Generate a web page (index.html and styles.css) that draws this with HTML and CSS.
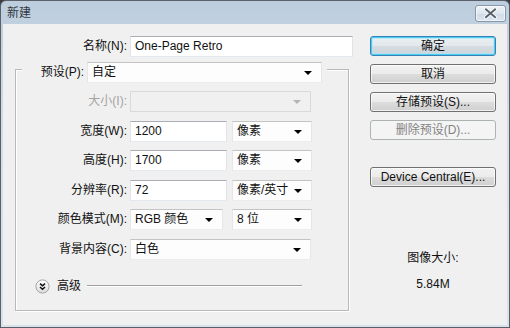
FILE: index.html
```html
<!DOCTYPE html>
<html lang="zh-CN">
<head>
<meta charset="utf-8">
<title>新建</title>
<link rel="stylesheet" href="styles.css">
</head>
<body>
<div class="window">
  <div class="titlebar">
    <span class="title">新建</span>
    <div class="close">
      <svg width="31" height="17" viewBox="0 0 31 17">
        <path d="M10.5 4 L20.5 12.5 M20.5 4 L10.5 12.5" stroke="#f4f7fa" stroke-width="4.4" stroke-linecap="round" fill="none"/>
        <path d="M10.5 4 L20.5 12.5 M20.5 4 L10.5 12.5" stroke="#5a6068" stroke-width="2" stroke-linecap="round" fill="none"/>
      </svg>
    </div>
  </div>
  <div class="body">
    <div class="main">
      <div class="name-row">
        <span class="lbl name-lbl">名称(N):</span>
        <div class="input name-input">One-Page Retro</div>
      </div>
      <div class="group">
        <div class="legend">
          <span class="lbl">预设(P):</span>
          <div class="select preset">自定<span class="arrow"></span></div>
        </div>
        <div class="rows">
          <div class="frow">
            <span class="lbl glbl disabled">大小(I):</span>
            <div class="select disabled-field w181"><span class="arrow grey"></span></div>
          </div>
          <div class="frow">
            <span class="lbl glbl">宽度(W):</span>
            <div class="input w97">1200</div>
            <div class="select w80 unit">像素<span class="arrow"></span></div>
          </div>
          <div class="frow">
            <span class="lbl glbl">高度(H):</span>
            <div class="input w97">1700</div>
            <div class="select w80 unit">像素<span class="arrow"></span></div>
          </div>
          <div class="frow">
            <span class="lbl glbl">分辨率(R):</span>
            <div class="input w97">72</div>
            <div class="select w80 unit">像素/英寸<span class="arrow"></span></div>
          </div>
          <div class="frow">
            <span class="lbl glbl">颜色模式(M):</span>
            <div class="select w93">RGB 颜色<span class="arrow"></span></div>
            <div class="select w80 bits">8 位<span class="arrow"></span></div>
          </div>
          <div class="frow">
            <span class="lbl glbl">背景内容(C):</span>
            <div class="select w181">白色<span class="arrow"></span></div>
          </div>
        </div>
        <div class="advanced">
          <svg class="adv-icon" width="15" height="15" viewBox="0 0 15 15">
            <defs>
              <linearGradient id="g" x1="0" y1="0" x2="0" y2="1">
                <stop offset="0" stop-color="#ffffff"/>
                <stop offset="1" stop-color="#dcdcdc"/>
              </linearGradient>
            </defs>
            <circle cx="7.5" cy="7.5" r="6.6" fill="url(#g)" stroke="#a3a3a3" stroke-width="1"/>
            <path d="M5 4.6 L7.5 6.8 L10 4.6 M5 8 L7.5 10.2 L10 8" stroke="#111" stroke-width="1.5" fill="none"/>
          </svg>
          <span class="adv-text">高级</span>
          <span class="adv-line"></span>
        </div>
      </div>
    </div>
    <div class="side">
      <div class="btn primary">确定</div>
      <div class="btn">取消</div>
      <div class="btn">存储预设(S)...</div>
      <div class="btn disabled-btn">删除预设(D)...</div>
      <div class="btn device">Device Central(E)...</div>
      <div class="size-label">图像大小:</div>
      <div class="size-value">5.84M</div>
    </div>
  </div>
</div>
</body>
</html>
```

FILE: styles.css
```css
* { box-sizing: border-box; }

html, body {
  margin: 0;
  padding: 0;
  background: #3a3d42;
}

body {
  font-family: "Liberation Sans", "Noto Sans CJK SC", sans-serif;
  font-size: 12px;
  color: #111;
}

.window {
  width: 510px;
  height: 328px;
  border: 1px solid #5b6068;
  border-radius: 6px 6px 0 0;
  background: linear-gradient(#bccddd, #d2dde8 40%, #d8e2ec);
  display: flex;
  flex-direction: column;
  overflow: hidden;
}

.titlebar {
  height: 23px;
  display: flex;
  align-items: flex-start;
  justify-content: space-between;
  padding: 0 3px 0 6px;
  flex: none;
}

.title {
  margin-top: 4px;
  line-height: 16px;
  color: #33373c;
  font-size: 12px;
}

.close {
  margin-top: 4px;
  width: 31px;
  height: 17px;
  border: 1px solid #8796a8;
  border-radius: 3px;
  background: linear-gradient(#eef3f8, #dde6ef 50%, #d0dce8 51%, #dbe5ef);
  box-shadow: inset 0 0 0 1px rgba(255,255,255,0.6);
  display: flex;
  align-items: center;
  justify-content: center;
}
.close svg { display: block; margin-top: -1px; }

.body {
  flex: 1;
  margin: 0 2px 2px 2px;
  background: #f0f0f0;
  display: flex;
  align-items: flex-start;
}

.main {
  width: 350px;
  padding-top: 12px;
  flex: none;
}

.lbl {
  line-height: 21px;
  white-space: nowrap;
}

.name-row {
  display: flex;
  height: 21px;
}
.name-lbl {
  width: 124px;
  text-align: right;
  margin-right: 3px;
}

.input, .select {
  height: 21px;
  background: #fff;
  border: 1px solid;
  border-color: #abadb3 #e2e3ea #e3e9ef #e2e3ea;
  padding-left: 4px;
  line-height: 19px;
  white-space: nowrap;
}

.name-input { width: 223px; }

.select {
  display: flex;
  align-items: center;
  padding-right: 9px;
  background: #fdfdfd;
  border-color: #c3c3c3 #e6e6e6 #ececec #e6e6e6;
}

.arrow {
  margin-left: auto;
  width: 0;
  height: 0;
  border-left: 4px solid transparent;
  border-right: 4px solid transparent;
  border-top: 4px solid #000;
  margin-top: 1px;
}
.arrow.grey { border-top-color: #b5b5b5; }

.group {
  margin-top: 12px;
  margin-left: 12px;
  width: 334px;
  border: 1px solid #b9b9b9;
  box-shadow: inset 1px 1px 0 #ffffff, 1px 1px 0 #ffffff;
  padding-bottom: 16px;
}

.legend {
  margin-top: -8px;
  margin-left: 6px;
  width: 305px;
  padding-right: 5px;
  background: #f0f0f0;
  display: flex;
  justify-content: flex-end;
  gap: 3px;
}

.preset { width: 235px; }

.rows {
  margin-top: 8px;
  display: flex;
  flex-direction: column;
  row-gap: 8.6px;
}

.frow {
  display: flex;
  height: 21px;
}

.glbl {
  width: 111px;
  text-align: right;
  margin-right: 3px;
}

.disabled { color: #a3a3a3; }

.disabled-field {
  background: #f0f0f0;
  border-color: #d9d9d9;
}

.w97 { width: 97px; }
.w80 { width: 80px; }
.w93 { width: 93px; }
.w181 { width: 181px; }
.unit { margin-left: 5px; }
.bits { margin-left: 9px; }

.advanced {
  margin-top: 19px;
  margin-left: 19px;
  height: 15px;
  display: flex;
  align-items: center;
}
.adv-icon { display: block; flex: none; }
.adv-text {
  margin-left: 7px;
  line-height: 15px;
}
.adv-line {
  margin-left: 6px;
  width: 215px;
  height: 2px;
  border-top: 1px solid #a0a0a0;
  border-bottom: 1px solid #ffffff;
}

.side {
  margin-left: 17px;
  width: 126px;
  padding-top: 12px;
  display: flex;
  flex-direction: column;
  gap: 8px;
  flex: none;
}

.btn {
  height: 20px;
  border: 1px solid #707070;
  border-radius: 3px;
  background: linear-gradient(#f2f2f2, #ebebeb 50%, #dddddd 51%, #cfcfcf);
  box-shadow: inset 0 0 0 1px rgba(255,255,255,0.7);
  text-align: center;
  line-height: 18px;
  color: #111;
  white-space: nowrap;
}

.primary {
  border-color: #3c7fb1;
  box-shadow: inset 0 0 0 1px #48cff5, inset 0 0 0 2px rgba(160,228,250,0.6);
  background: linear-gradient(#eaeff2, #e3e8ec 50%, #d6dde2 51%, #cdd4d9);
}

.disabled-btn {
  border-color: #adb2b5;
  background: #f4f4f4;
  box-shadow: none;
  color: #838383;
}

.device { margin-top: 19px; }

.size-label {
  margin-top: 55px;
  text-align: center;
  line-height: 16px;
}
.size-value {
  margin-top: 2px;
  text-align: center;
  line-height: 16px;
}
```
